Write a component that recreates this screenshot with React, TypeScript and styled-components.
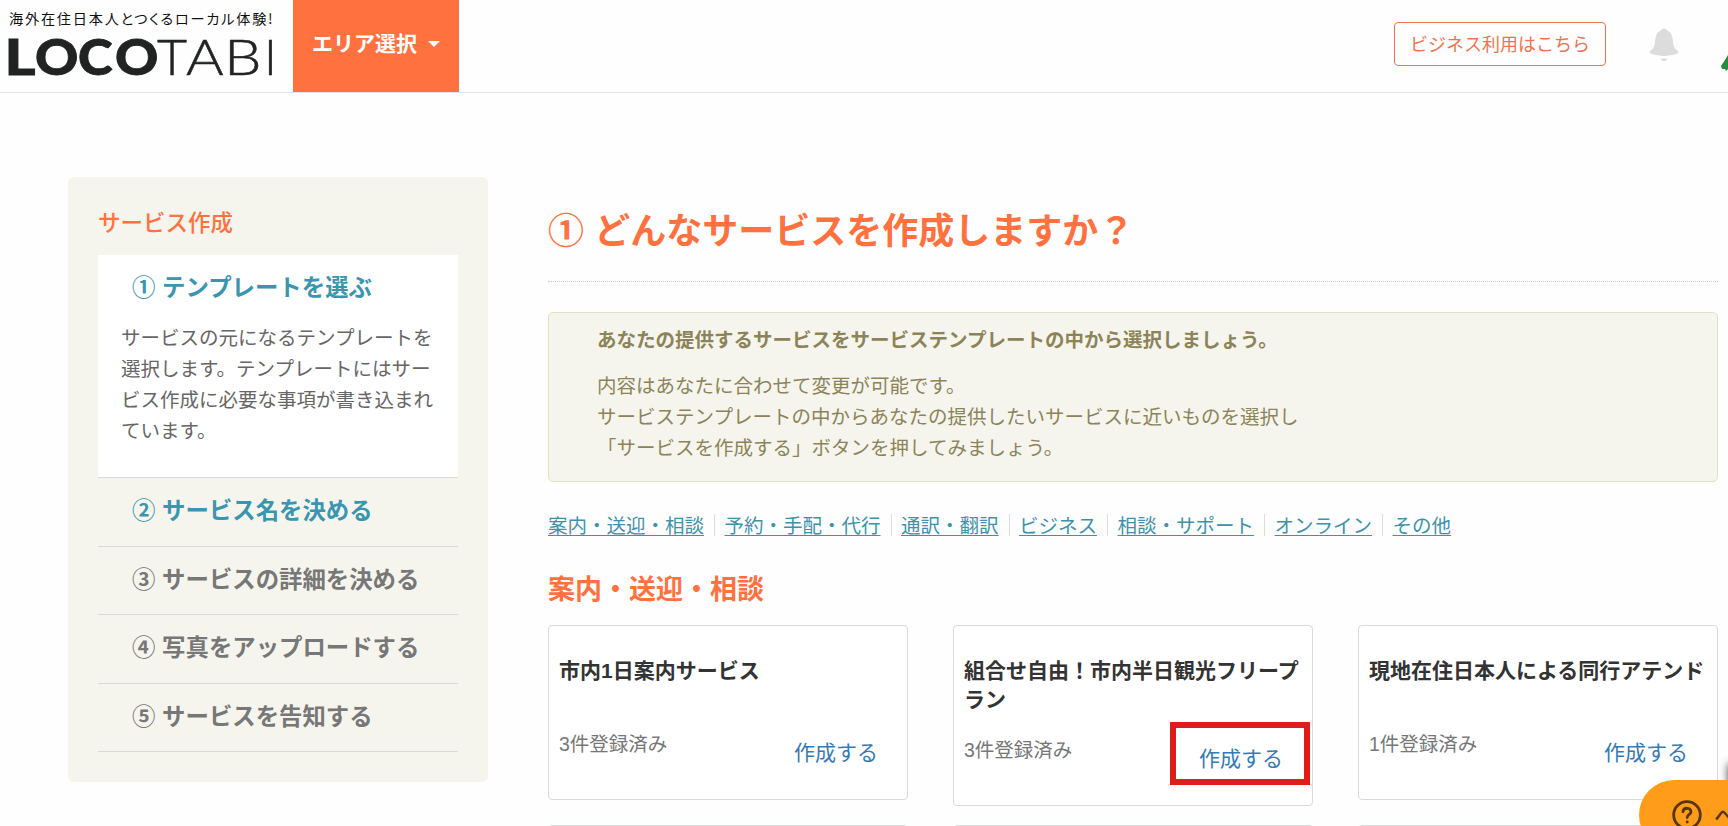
import styled, { createGlobalStyle } from "styled-components";

const GlobalStyle = createGlobalStyle`
* { box-sizing: border-box; }
html, body { overflow: hidden; }
body {
margin: 0;
background-color: #fefefe;
font-family: "Noto Sans CJK JP", sans-serif;
font-size: 19.5px;
color: #333333;
}
h1, h2, h3, p { margin: 0; }
a { text-decoration: none; }
`
const Page = styled.div`
width: 1728px;
height: 826px;
overflow: hidden;
`
const Header = styled.header`
display: flex;
align-items: flex-start;
height: 93px;
border-bottom: 1px solid #e4e4e4;
`
const Brand = styled.a`
display: flex;
flex-direction: column;
width: 293px;
padding: 8px 0 0 8px;
`
const Tagline = styled.span`
padding-left: 1px;
font-size: 14.2px;
line-height: 20px;
letter-spacing: 1.75px;
font-feature-settings: "palt";
white-space: nowrap;
color: #111111;
`
const Logo = styled.svg`
display: block;
width: 275px;
height: 52px;
margin-top: 1px;
overflow: visible;
font-family: Lato, sans-serif;
font-size: 49.5px;
fill: #212322;
stroke: #212322;
`
const AreaButton = styled.button`
display: flex;
align-items: flex-start;
gap: 11px;
width: 166px;
height: 92px;
padding: 27px 0 0 19px;
border: 0;
background-color: #ff713f;
font-family: inherit;
font-size: 21px;
font-weight: 700;
line-height: 30px;
color: #ffffff;
`
const Caret = styled.span`
margin-top: 14px;
border-top: 6px solid #ffffff;
border-left: 6px solid transparent;
border-right: 6px solid transparent;
`
const HeaderRight = styled.div`
display: flex;
align-items: flex-start;
margin-left: auto;
padding-top: 22px;
`
const BusinessButton = styled.a`
width: 212px;
height: 44px;
border: 1px solid #ee7450;
border-radius: 4px;
font-size: 18px;
line-height: 40px;
text-align: center;
color: #ee7450;
`
const Bell = styled.svg`
width: 30px;
height: 34px;
margin: 6px 42px 0 43px;
`
const Avatar = styled.svg`
width: 7px;
height: 16px;
margin-top: 33px;
`
const Columns = styled.div`
display: flex;
align-items: flex-start;
gap: 60px;
padding: 84px 10px 0 68px;
`
const Sidebar = styled.aside`
width: 420px;
height: 605px;
padding: 27px 30px 0;
border-radius: 6px;
background-color: #f5f5ee;
`
const SidebarTitle = styled.h2`
height: 51px;
font-size: 22.5px;
font-weight: 500;
line-height: 34px;
color: #ff713f;
`
const Step = styled.div<{ $open?: boolean }>`
height: ${p => (p.$open ? "223px" : "68.5px")};
border-bottom: 1px solid #d9d9d6;
background-color: ${p => (p.$open ? "#ffffff" : "transparent")};
`
const StepTitle = styled.h3<{ $active?: boolean }>`
padding: 14px 0 0 34px;
font-size: 23.4px;
font-weight: 700;
line-height: 34px;
word-spacing: 1.4px;
white-space: nowrap;
color: ${p => (p.$active ? "#3a96b0" : "#777777")};
`
const StepText = styled.p`
padding: 18px 21px 0 23px;
line-height: 31px;
color: #666666;
`
const Main = styled.main`
width: 1170px;
`
const PageTitle = styled.h1`
height: 105px;
padding-top: 26px;
border-bottom: 1px dotted #cccccc;
font-size: 36px;
font-weight: 700;
line-height: 50px;
word-spacing: 2px;
color: #ff713f;
`
const Notice = styled.div`
height: 170px;
margin-top: 30px;
padding: 10px 48px 0;
border: 1px solid #e0e2c4;
border-radius: 5px;
background-color: #f5f5ee;
line-height: 31px;
color: #8c8458;
`
const NoticeTitle = styled.p`
margin-bottom: 15px;
font-weight: 700;
`
const CategoryNav = styled.nav`
display: flex;
margin-top: 32px;
`
const CategoryLink = styled.a`
height: 22px;
line-height: 22px;
color: #3f92ab;
text-decoration: underline;
text-decoration-thickness: 1px;
text-underline-offset: 2px;
`
const Divider = styled.span`
width: 1px;
height: 22px;
margin: 0 9.5px 0 10px;
background-color: #dddddd;
`
const SectionTitle = styled.h2`
margin: 32px 0 18px;
font-size: 27px;
font-weight: 700;
line-height: 39px;
color: #ff713f;
`
const CardGrid = styled.div`
display: grid;
grid-template-columns: repeat(3, 360px);
align-items: start;
column-gap: 45px;
row-gap: 19px;
`
const Card = styled.article`
min-height: 175px;
padding: 30px 10px;
border: 1px solid #d8dadb;
border-radius: 4px;
background-color: #ffffff;
font-family: "Liberation Sans", "Noto Sans CJK JP", sans-serif;
`
const CardTitle = styled.h3`
min-height: 53px;
font-size: 21px;
font-weight: 700;
line-height: 29.4px;
`
const CardFoot = styled.div`
display: flex;
justify-content: space-between;
padding: 20px 19px 0 0;
`
const Count = styled.span`
line-height: 31px;
color: #777777;
`
const CreateLink = styled.a<{ $marked?: boolean }>`
position: relative;
height: 40px;
padding-top: 8px;
font-size: 21px;
line-height: 31px;
color: #337ab7;
&::after {
content: "";
box-sizing: border-box;
display: ${p => (p.$marked ? "block" : "none")};
position: absolute;
top: -13px;
left: -29px;
width: 140px;
height: 63px;
border: 6px solid #e21b1b;
}
`
const SideWidget = styled.div`
position: fixed;
left: 1728px;
top: 764px;
width: 60px;
height: 60px;
box-shadow: 0 0 8px rgba(0, 0, 0, 0.7);
`
const HelpButton = styled.button`
position: fixed;
left: 1639px;
top: 780px;
display: flex;
align-items: center;
gap: 12px;
width: 140px;
height: 70px;
padding: 0 0 0 33px;
border: 0;
border-radius: 35px;
background-color: #ff9c1a;
font-family: inherit;
font-size: 21px;
font-weight: 500;
color: #573400;
white-space: nowrap;
`
const HelpIcon = styled.svg`
flex: none;
width: 30px;
height: 30px;
fill: none;
stroke: #573400;
stroke-width: 2.8;
stroke-linecap: round;
`
// x is the pen position of the letter, stretch its horizontal scale
const logoLetters = [
    { char: "L", x: 4.6, stretch: 1.2, weight: 900 },
    { char: "O", x: 35, stretch: 1.08, weight: 900 },
    { char: "C", x: 78, stretch: 1.06, weight: 900 },
    { char: "O", x: 115, stretch: 1.08, weight: 900 },
    { char: "T", x: 157, stretch: 1.05, weight: 300 },
    { char: "A", x: 186, stretch: 1.16, weight: 300 },
    { char: "B", x: 224, stretch: 1.2, weight: 300 },
    { char: "I", x: 264, stretch: 1, weight: 300 },
]
const steps = [
    { title: "② サービス名を決める", active: true },
    { title: "③ サービスの詳細を決める", active: false },
    { title: "④ 写真をアップロードする", active: false },
    { title: "⑤ サービスを告知する", active: false },
]
const categories = ["案内・送迎・相談", "予約・手配・代行", "通訳・翻訳", "ビジネス", "相談・サポート", "オンライン", "その他"]
const services = [
    { title: "市内1日案内サービス", count: 3, marked: false },
    { title: "組合せ自由！市内半日観光フリープラン", count: 3, marked: true },
    { title: "現地在住日本人による同行アテンド", count: 1, marked: false },
]

export default function App() {
    return (
        <Page>
          <GlobalStyle />
          <Header>
            <Brand>
              <Tagline>海外在住日本人とつくるローカル体験!</Tagline>
              <Logo viewBox="8 29 275 52">
                {logoLetters.map(letter => (
                  <text
                    key={letter.x}
                    transform={`translate(${letter.x} 75) scale(${letter.stretch} 1)`}
                    fontWeight={letter.weight}
                    strokeWidth={letter.weight === 900 ? 0.8 : 0.5}
                  >
                    {letter.char}
                  </text>
                ))}
              </Logo>
            </Brand>
            <AreaButton>エリア選択<Caret /></AreaButton>
            <HeaderRight>
              <BusinessButton>ビジネス利用はこちら</BusinessButton>
              <Bell viewBox="0 0 30 34" fill="#dcdcdc">
                <path d="M15 0.5C17 0.5 17.5 1.3 17.8 2.2C22 3.8 23.6 8 23.9 13C24.2 18.5 25.5 21 29.4 23.2C30 24.5 29 25.2 27.5 25.8C21 28.6 9 28.6 2.5 25.8C1 25.2 0 24.5 0.6 23.2C4.5 21 5.8 18.5 6.1 13C6.4 8 8 3.8 12.2 2.2C12.5 1.3 13 0.5 15 0.5Z" />
                <path d="M12 30.5H18C17.5 34 12.5 34 12 30.5Z" />
              </Bell>
              <Avatar viewBox="0 0 7 16">
                <path d="M7 0L4 5L0 11L1 14L4 14L5 16L7 14Z" fill="#278a3c" />
              </Avatar>
            </HeaderRight>
          </Header>
          <Columns>
            <Sidebar>
              <SidebarTitle>サービス作成</SidebarTitle>
              <Step $open>
                <StepTitle $active>① テンプレートを選ぶ</StepTitle>
                <StepText>サービスの元になるテンプレートを選択します。テンプレートにはサービス作成に必要な事項が書き込まれています。</StepText>
              </Step>
              {steps.map(step => (
                <Step key={step.title}>
                  <StepTitle $active={step.active}>{step.title}</StepTitle>
                </Step>
              ))}
            </Sidebar>
            <Main>
              <PageTitle>① どんなサービスを作成しますか？</PageTitle>
              <Notice>
                <NoticeTitle>あなたの提供するサービスをサービステンプレートの中から選択しましょう。</NoticeTitle>
                <p>内容はあなたに合わせて変更が可能です。</p>
                <p>サービステンプレートの中からあなたの提供したいサービスに近いものを選択し</p>
                <p>「サービスを作成する」ボタンを押してみましょう。</p>
              </Notice>
              <CategoryNav>
                {categories.map((name, i) => [
                  i > 0 && <Divider key={name + "-divider"} />,
                  <CategoryLink key={name}>{name}</CategoryLink>,
                ])}
              </CategoryNav>
              <SectionTitle>案内・送迎・相談</SectionTitle>
              <CardGrid>
                {services.map(service => (
                  <Card key={service.title}>
                    <CardTitle>{service.title}</CardTitle>
                    <CardFoot>
                      <Count>{service.count}件登録済み</Count>
                      <CreateLink $marked={service.marked}>作成する</CreateLink>
                    </CardFoot>
                  </Card>
                ))}
                <Card />
                <Card />
                <Card />
              </CardGrid>
            </Main>
          </Columns>
          <SideWidget />
          <HelpButton>
            <HelpIcon viewBox="0 0 30 30">
              <circle cx="15" cy="15" r="13.3" />
              <path d="M11 11.8C11.2 7 19 7.2 19 11.8C19 14.6 15.2 14.4 15.2 17.6M15.2 21.8V22" />
            </HelpIcon>
            ヘルプ
          </HelpButton>
        </Page>
    )
}
